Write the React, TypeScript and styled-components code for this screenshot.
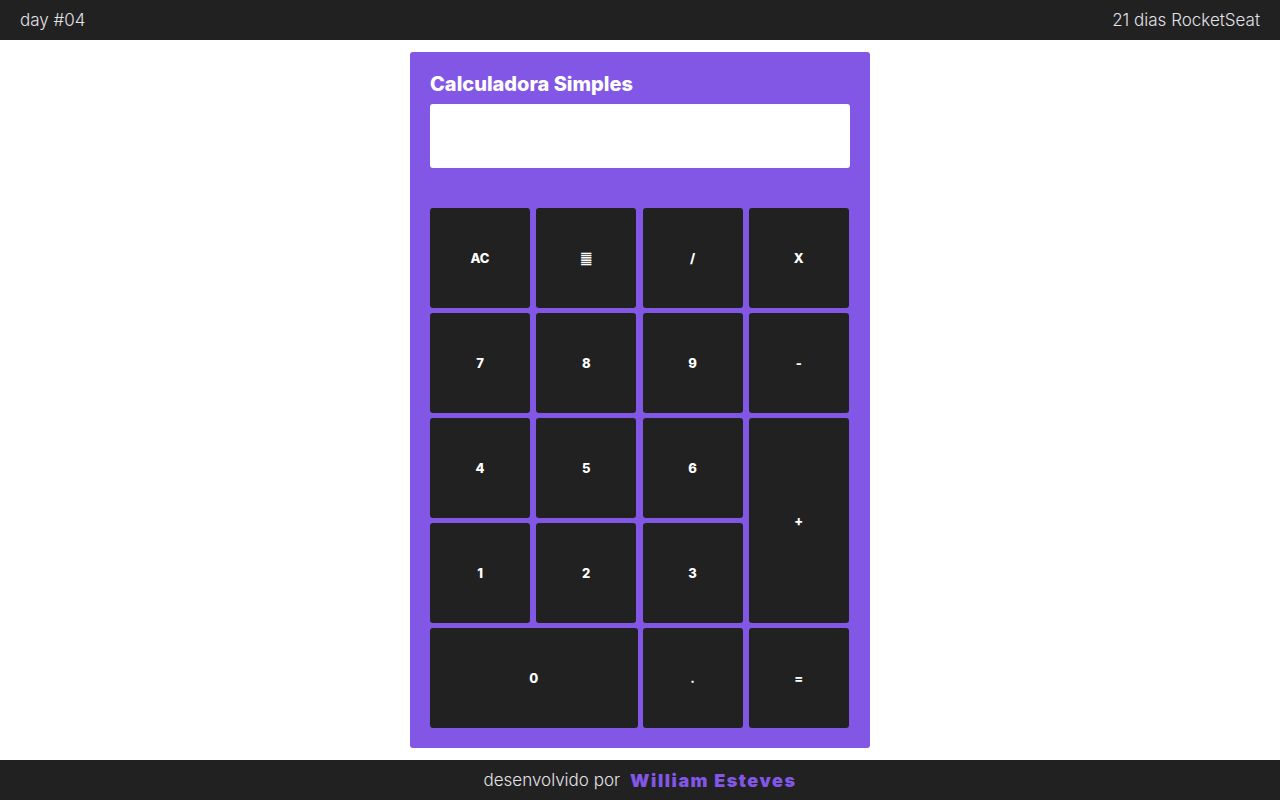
import React from "react";
import styled, { createGlobalStyle } from "styled-components";

const Global = createGlobalStyle`
  * { box-sizing: border-box; }
  html, body { margin: 0; padding: 0; }
  body { font-family: Inter, "Noto Sans", sans-serif; background: #ffffff; }
`;

const Page = styled.div`
  display: flex;
  flex-direction: column;
  min-height: 800px;
`;

const Bar = styled.header<{ $center?: boolean }>`
  height: 40px;
  flex: 0 0 40px;
  background: #212121;
  color: #e1e1e6;
  display: flex;
  align-items: center;
  justify-content: ${(p) => (p.$center ? "center" : "space-between")};
  padding: 0 20px;
  font-size: 17px;
  font-weight: 300;
`;

const Main = styled.main`
  flex: 1;
  display: flex;
  align-items: center;
  justify-content: center;
  padding: 12px 0;
`;

const Card = styled.section`
  width: 460px;
  background: #8257e5;
  border-radius: 3px;
  padding: 20px;
  display: flex;
  flex-direction: column;
`;

const Title = styled.h1`
  margin: 0 0 8px;
  font-size: 20px;
  line-height: 24px;
  font-weight: 800;
  color: #ffffff;
`;

const Display = styled.div`
  height: 64px;
  background: #ffffff;
  border-radius: 3px;
  margin-bottom: 40px;
`;

const Keys = styled.div`
  display: grid;
  grid-template-columns: repeat(4, 1fr);
  grid-auto-rows: 100px;
  gap: 5px;
`;

const Key = styled.button<{ $wide?: boolean; $tall?: boolean }>`
  width: ${(p) => (p.$wide ? "100%" : "100px")};
  height: 100%;
  grid-column: ${(p) => (p.$wide ? "span 2" : "auto")};
  grid-row: ${(p) => (p.$tall ? "span 2" : "auto")};
  background: #212121;
  border: none;
  border-radius: 3px;
  color: #ffffff;
  font-family: Inter, "Noto Sans", sans-serif;
  font-size: 13px;
  font-weight: 800;
  display: flex;
  align-items: center;
  justify-content: center;
  padding: 0;
  cursor: pointer;
`;

const Glyph = styled.span`
  font-family: "DejaVu Sans", sans-serif;
  font-weight: 400;
  font-size: 14px;
`;

const Muted = styled.span`
  color: #e1e1e6;
`;

const Author = styled.span`
  margin-left: 10px;
  color: #8257e5;
  font-weight: 900;
  font-size: 18px;
  letter-spacing: 1.5px;
`;

export default function App() {
  return (
    <Page>
      <Global />
      <Bar>
        <span>day #04</span>
        <span>21 dias RocketSeat</span>
      </Bar>
      <Main>
        <Card>
          <Title>Calculadora Simples</Title>
          <Display />
          <Keys>
            <Key>AC</Key>
            <Key><Glyph>䷀</Glyph></Key>
            <Key>/</Key>
            <Key>X</Key>
            <Key>7</Key>
            <Key>8</Key>
            <Key>9</Key>
            <Key>-</Key>
            <Key>4</Key>
            <Key>5</Key>
            <Key>6</Key>
            <Key $tall>+</Key>
            <Key>1</Key>
            <Key>2</Key>
            <Key>3</Key>
            <Key $wide>0</Key>
            <Key>.</Key>
            <Key>=</Key>
          </Keys>
        </Card>
      </Main>
      <Bar as="footer" $center>
        <Muted>desenvolvido por</Muted>
        <Author>William Esteves</Author>
      </Bar>
    </Page>
  );
}
